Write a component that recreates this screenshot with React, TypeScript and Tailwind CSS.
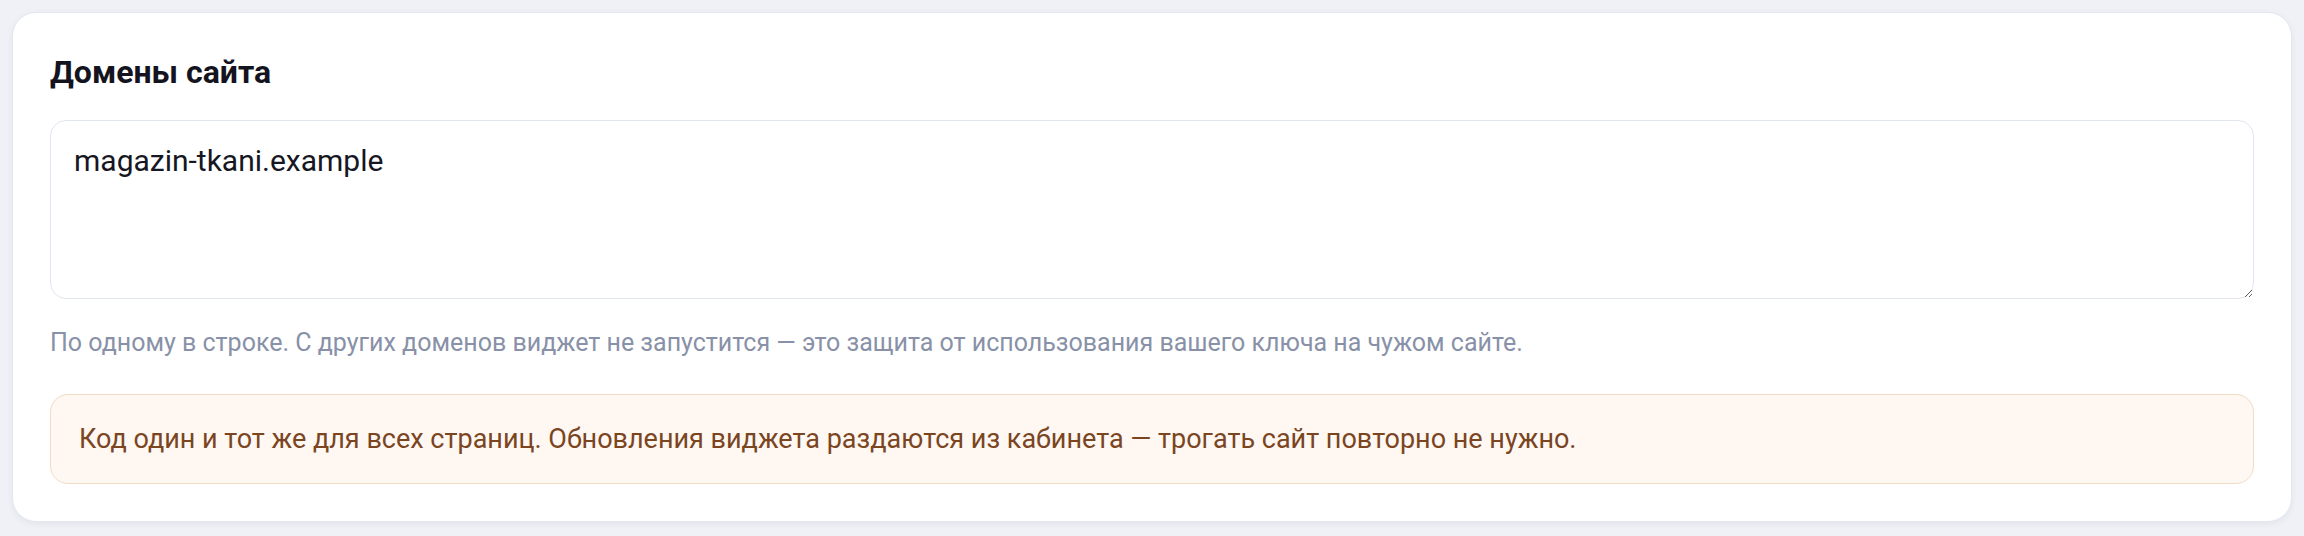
import React from "react";

export default function App() {
  return (
    <div className="min-h-[536px] bg-[#eff1f6] p-[12px] font-['Roboto',sans-serif]">
      <div className="rounded-[24px] border border-[#e3e7f0] bg-white px-[37px] pt-[39px] pb-[37px] shadow-[0_2px_6px_rgba(30,40,80,0.06)]">
        <h2 className="text-[32px] leading-[40px] font-bold text-[#141420]">Домены сайта</h2>
        <textarea
          className="mt-[28px] block h-[179px] w-full resize-y rounded-[16px] border border-[#e1e5f0] bg-white px-[23px] pt-[17px] text-[30px] leading-[45px] text-[#161722] outline-none"
          defaultValue="magazin-tkani.example"
        />
        <p className="mt-[26px] text-[25px] leading-[36px] text-[#8891a7]">
          По одному в строке. С других доменов виджет не запустится — это защита от использования вашего ключа на чужом сайте.
        </p>
        <div className="mt-[33px] rounded-[18px] border-[1.5px] border-[#f2dcc6] bg-[#fff7f2] px-[28px] py-[24px] text-[27px] leading-[40px] text-[#7a451f]">
          Код один и тот же для всех страниц. Обновления виджета раздаются из кабинета — трогать сайт повторно не нужно.
        </div>
      </div>
    </div>
  );
}
